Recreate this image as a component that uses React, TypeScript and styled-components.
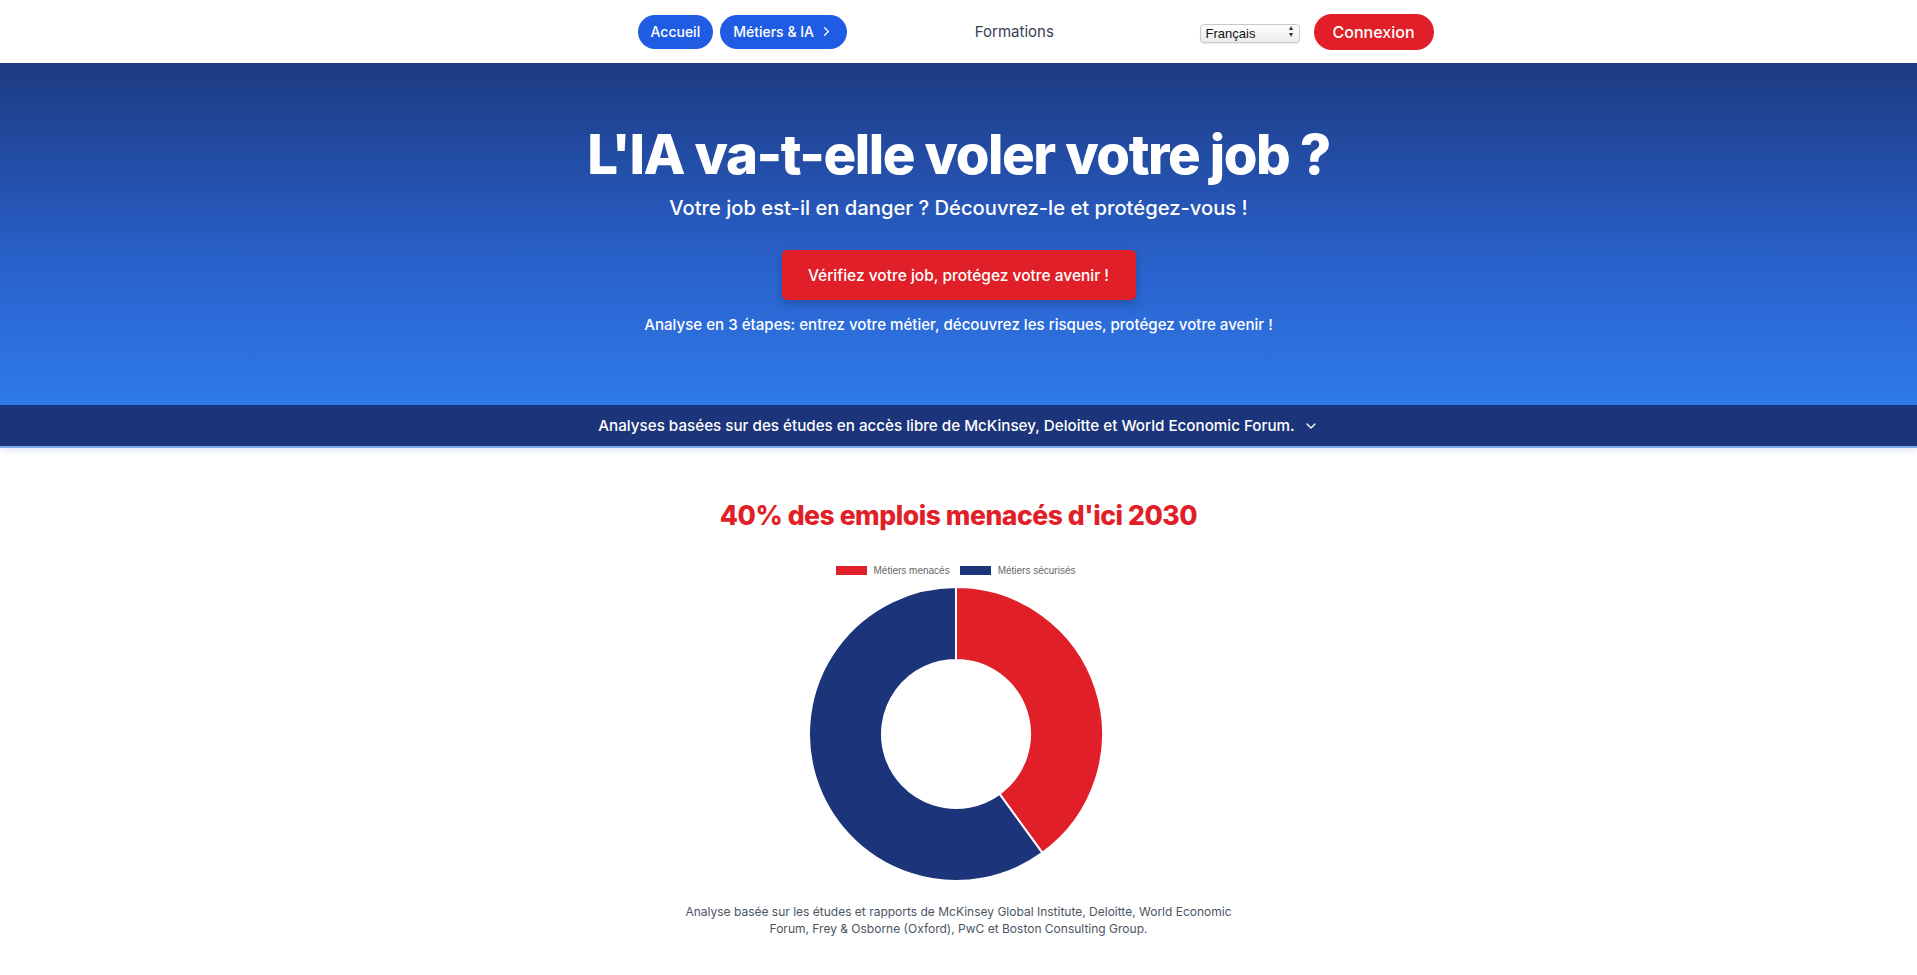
import styled, { createGlobalStyle } from "styled-components";
import { ChevronRight, ChevronDown } from "lucide-react";

const GlobalStyle = createGlobalStyle`
  html, body {
    margin: 0;
    padding: 0;
    background: #ffffff;
    font-family: Inter, "Noto Sans", "Liberation Sans", sans-serif;
  }
  * {
    box-sizing: border-box;
  }
`;

const NavBar = styled.header`
  height: 63px;
  background: #ffffff;
  display: flex;
  justify-content: center;
  align-items: center;
  padding-left: 154px;
`;
const NavInner = styled.nav`
  width: 796px;
  display: flex;
  align-items: center;
  justify-content: space-between;
`;
const NavGroup = styled.div<{ gap: number }>`
  display: flex;
  align-items: center;
  gap: ${(p) => p.gap}px;
`;
const PillButton = styled.button<{ tone: "blue" | "red" }>`
  display: flex;
  align-items: center;
  gap: 5px;
  border: 0;
  border-radius: 999px;
  cursor: pointer;
  color: #ffffff;
  font-family: inherit;
  background: ${(p) => (p.tone === "blue" ? "#1f5ce3" : "#e01f29")};
  height: ${(p) => (p.tone === "blue" ? 34 : 36)}px;
  padding: ${(p) => (p.tone === "blue" ? "0 13px" : "0 19px")};
  font-size: ${(p) => (p.tone === "blue" ? 14 : 16)}px;
  font-weight: 500;
`;
const NavLink = styled.a`
  color: #374151;
  font-size: 15px;
  font-weight: 400;
  text-decoration: none;
  cursor: pointer;
  margin-right: 18px;
`;
const SelectWrap = styled.div`
  position: relative;
  width: 100px;
  height: 19px;
  &::after {
    content: "▴▾";
    position: absolute;
    right: 5px;
    top: 2px;
    width: 6px;
    font-size: 8px;
    line-height: 7px;
    color: #333;
    word-break: break-all;
    pointer-events: none;
  }
`;
const LangSelect = styled.select`
  appearance: none;
  width: 100%;
  height: 100%;
  border: 1px solid #c9c9c9;
  border-radius: 4px;
  background: linear-gradient(#ffffff, #ececec);
  box-shadow: 0 1px 1px rgba(0, 0, 0, 0.08);
  font-family: "Liberation Sans", Arial, sans-serif;
  font-size: 13px;
  color: #111;
  padding: 0 0 0 5px;
`;

const Hero = styled.section`
  height: 342px;
  background: linear-gradient(180deg, #1d3a82 0%, #2a62cd 60%, #2f7aea 100%);
  display: flex;
  flex-direction: column;
  align-items: center;
  padding-top: 58px;
  color: #ffffff;
  text-align: center;
`;
const HeroTitle = styled.h1`
  margin: 0;
  font-size: 54.5px;
  line-height: 67px;
  font-weight: 800;
  letter-spacing: -1.45px;
`;
const HeroSubtitle = styled.p`
  margin: 6px 0 0;
  font-size: 20.2px;
  line-height: 28px;
  font-weight: 500;
`;
const CtaButton = styled.button`
  margin-top: 28px;
  width: 354px;
  height: 50px;
  border: 0;
  border-radius: 5px;
  background: #e01f29;
  color: #ffffff;
  font-family: inherit;
  font-size: 15.5px;
  font-weight: 500;
  cursor: pointer;
  box-shadow: 0 4px 10px rgba(0, 0, 0, 0.2);
`;
const HeroNote = styled.p`
  margin: 13px 0 0;
  font-size: 15.1px;
  line-height: 24px;
  font-weight: 500;
`;

const SourceBanner = styled.div`
  height: 43px;
  background: #1c3479;
  color: #ffffff;
  display: flex;
  align-items: center;
  justify-content: center;
  gap: 8px;
  font-size: 15.2px;
  font-weight: 500;
  border-bottom: 2px solid #7fa8ee;
  box-shadow: 0 3px 6px rgba(40, 80, 160, 0.12);
`;

const StatsSection = styled.section`
  display: flex;
  flex-direction: column;
  align-items: center;
  padding-top: 49px;
`;
const StatsTitle = styled.h2`
  margin: 0;
  color: #e01f29;
  font-size: 26.5px;
  line-height: 36px;
  font-weight: 800;
  letter-spacing: -0.45px;
`;
const Legend = styled.div`
  margin-top: 31px;
  display: flex;
  align-items: center;
  gap: 10px;
  height: 12px;
  margin-left: -6px;
`;
const LegendItem = styled.div`
  display: flex;
  align-items: center;
  gap: 7px;
  font-family: "Liberation Sans", Arial, sans-serif;
  font-size: 10px;
  color: #666666;
`;
const Swatch = styled.span<{ color: string }>`
  width: 31px;
  height: 9px;
  background: ${(p) => p.color};
`;
const Donut = styled.svg`
  margin-top: 10px;
  margin-left: -6px;
  display: block;
`;
const SourceNote = styled.p`
  margin: 21px 0 0;
  max-width: 560px;
  text-align: center;
  color: #4b5563;
  font-size: 12px;
  line-height: 17px;
`;

const RED = "#e01f29";
const NAVY = "#1c3479";

function arc(cx: number, cy: number, R: number, r: number, a0: number, a1: number) {
  const pt = (rad: number, a: number) => {
    const t = ((a - 90) * Math.PI) / 180;
    return `${cx + rad * Math.cos(t)} ${cy + rad * Math.sin(t)}`;
  };
  const large = a1 - a0 > 180 ? 1 : 0;
  return `M ${pt(R, a0)} A ${R} ${R} 0 ${large} 1 ${pt(R, a1)} L ${pt(r, a1)} A ${r} ${r} 0 ${large} 0 ${pt(r, a0)} Z`;
}

const data = [
  { label: "Métiers menacés", value: 40, color: RED },
  { label: "Métiers sécurisés", value: 60, color: NAVY },
];

export default function App() {
  let start = 0;
  const slices = data.map((d) => {
    const end = start + (d.value / 100) * 360;
    const path = arc(148, 148, 147, 74, start, end);
    start = end;
    return { ...d, path };
  });
  return (
    <>
      <GlobalStyle />
      <NavBar>
        <NavInner>
          <NavGroup gap={7}>
            <PillButton tone="blue">Accueil</PillButton>
            <PillButton tone="blue">
              Métiers &amp; IA <ChevronRight size={15} strokeWidth={2} />
            </PillButton>
          </NavGroup>
          <NavLink>Formations</NavLink>
          <NavGroup gap={14}>
            <SelectWrap>
              <LangSelect defaultValue="fr">
                <option value="fr">Français</option>
                <option value="en">English</option>
              </LangSelect>
            </SelectWrap>
            <PillButton tone="red">Connexion</PillButton>
          </NavGroup>
        </NavInner>
      </NavBar>
      <Hero>
        <HeroTitle>L'IA va-t-elle voler votre job ?</HeroTitle>
        <HeroSubtitle>Votre job est-il en danger ? Découvrez-le et protégez-vous !</HeroSubtitle>
        <CtaButton>Vérifiez votre job, protégez votre avenir !</CtaButton>
        <HeroNote>
          Analyse en 3 étapes: entrez votre métier, découvrez les risques, protégez votre avenir !
        </HeroNote>
      </Hero>
      <SourceBanner>
        Analyses basées sur des études en accès libre de McKinsey, Deloitte et World Economic Forum.
        <ChevronDown size={16} strokeWidth={2} />
      </SourceBanner>
      <StatsSection>
        <StatsTitle>40% des emplois menacés d'ici 2030</StatsTitle>
        <Legend>
          {data.map((d) => (
            <LegendItem key={d.label}>
              <Swatch color={d.color} />
              {d.label}
            </LegendItem>
          ))}
        </Legend>
        <Donut width={296} height={296} viewBox="0 0 296 296">
          {slices.map((s) => (
            <path key={s.label} d={s.path} fill={s.color} stroke="#ffffff" strokeWidth={2} />
          ))}
        </Donut>
        <SourceNote>
          Analyse basée sur les études et rapports de McKinsey Global Institute, Deloitte, World
          Economic Forum, Frey &amp; Osborne (Oxford), PwC et Boston Consulting Group.
        </SourceNote>
      </StatsSection>
    </>
  );
}
